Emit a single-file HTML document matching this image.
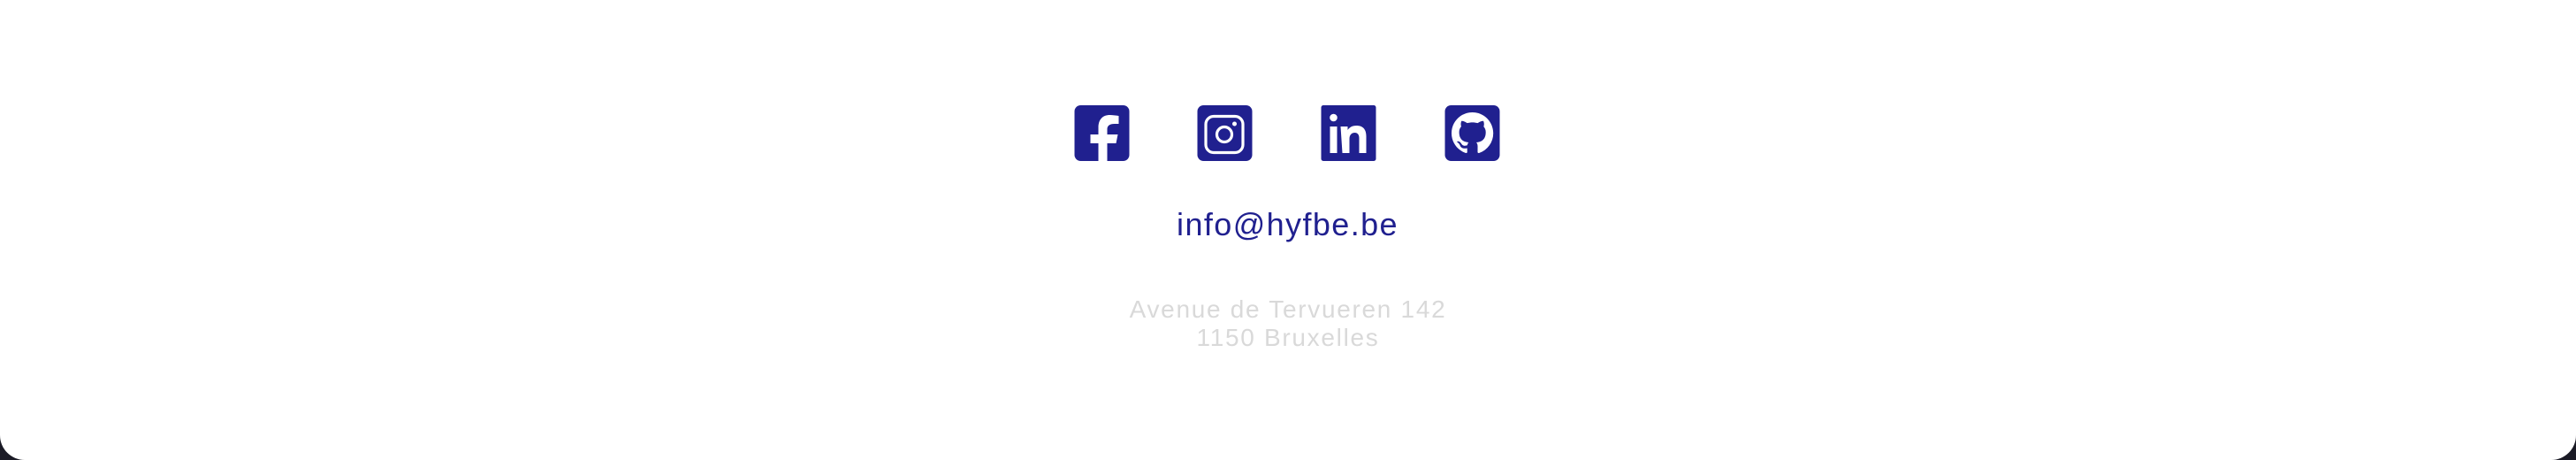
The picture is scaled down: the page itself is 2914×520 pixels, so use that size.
<!DOCTYPE html>
<html><head><meta charset="utf-8"><style>
html,body{margin:0;padding:0;background:#1b1b26;}
.page{position:relative;width:2914px;height:520px;background:#fff;border-radius:0 0 28px 28px;overflow:hidden;font-family:"Liberation Sans",Helvetica,Arial,sans-serif;}
svg.ic{position:absolute;top:119px;width:63px;height:63px;}
.email{position:absolute;left:1330px;width:253px;text-align:center;top:233px;font-size:36px;letter-spacing:1.4px;color:#20208f;white-space:nowrap}
.addr{position:absolute;left:0;width:2914px;text-align:center;top:334px;font-size:28px;line-height:32px;letter-spacing:1.7px;color:#d9d9d9;}
</style></head><body><div class="page">
<svg class="ic" style="left:1215px" viewBox="0 0 62 63"><rect width="62" height="63" rx="7" fill="#20208f"/><path d="M27 63V43h-9V33h9v-8c0-9 5-14 13-14 3 0 7 .5 10 1v9h-5c-5 0-8 2-8 6v6h12l-2 10H37v20z" fill="#fff"/></svg>
<svg class="ic" style="left:1354px" viewBox="0 0 62 63"><rect width="62" height="63" rx="7" fill="#20208f"/><rect x="9.5" y="12.5" width="42" height="41" rx="9" fill="none" stroke="#fff" stroke-width="3.2"/><circle cx="30.5" cy="33" r="8.5" fill="none" stroke="#fff" stroke-width="3.2"/><circle cx="42" cy="21" r="2.5" fill="#fff"/></svg>
<svg class="ic" style="left:1494px" viewBox="0 0 62 63"><rect width="62" height="63" rx="2.5" fill="#20208f"/><circle cx="14" cy="14" r="4.3" fill="#fff"/><rect x="10" y="24" width="8" height="30" fill="#fff"/><path d="M22 24h8v4c2-3 5-5 10-5 7 0 11 4 11 12v19h-8V37c0-4-2-6-5-6s-6 2-6 7v16h-8z" fill="#fff"/></svg>
<svg class="ic" style="left:1634px" viewBox="0 0 62 63"><rect width="62" height="63" rx="7" fill="#20208f"/><g transform="translate(7.5,8) scale(2.95)"><path fill="#fff" d="M8 0C3.58 0 0 3.58 0 8c0 3.54 2.29 6.53 5.47 7.59.4.07.55-.17.55-.38 0-.19-.01-.82-.01-1.49-2.01.37-2.53-.49-2.69-.94-.09-.23-.48-.94-.82-1.130-.28-.15-.68-.52-.01-.53.63-.01 1.08.58 1.230.82.72 1.21 1.870.87 2.330.66.07-.52.28-.87.51-1.07-1.78-.2-3.64-.89-3.64-3.950 0-.87.31-1.59.82-2.150-.08-.2-.36-1.02.08-2.12 0 0 .67-.21 2.2.82.64-.18 1.32-.27 2-.27.68 0 1.36.09 2 .27 1.53-1.04 2.2-.82 2.2-.82.44 1.1.16 1.92.08 2.12.51.56.82 1.27.82 2.15 0 3.07-1.87 3.75-3.65 3.95.29.25.54.73.54 1.48 0 1.07-.01 1.93-.01 2.2 0 .21.15.46.55.38A8.013 8.013 0 0016 8c0-4.42-3.58-8-8-8z"/></g></svg>
<div class="email">info@hyfbe.be</div>
<div class="addr">Avenue de Tervueren 142<br>1150 Bruxelles</div>
</div></body></html>
